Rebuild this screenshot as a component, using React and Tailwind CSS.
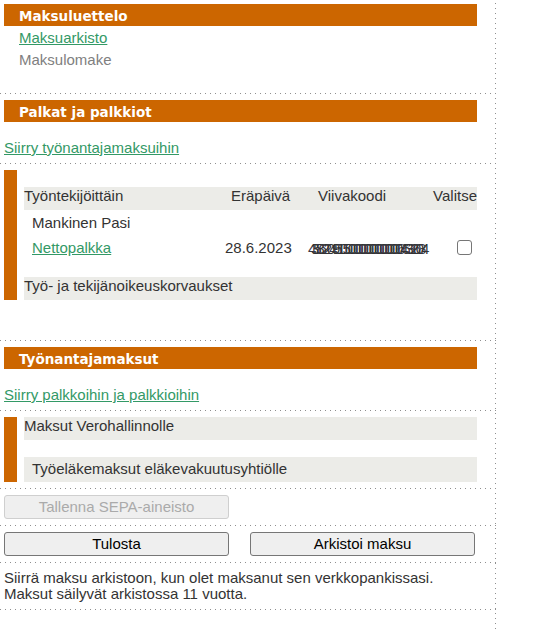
const HDots = () => <div className="h-px w-full bg-[repeating-linear-gradient(90deg,#8f8f8f_0,#8f8f8f_1px,transparent_1px,transparent_5px)]" />;

const Header = ({ children }) => (
  <div className="ml-1 flex h-[22px] w-[473px] items-center bg-[#cc6600] pl-[15px] pt-[2px] font-['DejaVu_Sans'] text-[13.5px] font-bold text-white">{children}</div>
);

const Link = ({ children }) => (
  <a href="#" className="text-[#339966] underline">{children}</a>
);

const Btn = ({ children, disabled }) => (
  <button
    disabled={disabled}
    className={`h-6 w-[225px] rounded-[3px] border bg-[#efefef] text-center text-[15px] ${disabled ? "border-[#cfcfcf] text-[#aaaaaa]" : "border-[#767676] text-black"}`}
  >
    {children}
  </button>
);

export default function App() {
  return (
    <div className="relative h-[632px] w-[545px] overflow-hidden bg-white font-['Liberation_Sans',sans-serif] text-[15px] text-[#333333]">
      <div className="flex h-full w-[496px] flex-col bg-[repeating-linear-gradient(180deg,#8f8f8f_0,#8f8f8f_1px,transparent_1px,transparent_5px)] bg-[length:1px_100%] bg-[position:495px_3px] bg-no-repeat">
        <div className="h-[4px]" />
        <Header>Maksuluettelo</Header>
        <div className="flex flex-col pl-[19px]">
          <div className="flex h-[23px] items-end leading-[22px]"><Link>Maksuarkisto</Link></div>
          <div className="flex h-[22px] items-end leading-[22px] text-[#808080]">Maksulomake</div>
        </div>
        <div className="h-[22px]" />
        <HDots />
        <div className="h-[6px]" />
        <Header>Palkat ja palkkiot</Header>
        <div className="flex h-[41px] items-end pl-1 pb-[5px] leading-[20px]"><Link>Siirry työnantajamaksuihin</Link></div>
        <HDots />
        <div className="h-[6px]" />
        <div className="ml-1 flex h-[130px] w-[473px]">
          <div className="w-[13px] bg-[#cc6600]" />
          <div className="ml-[7px] flex flex-1 flex-col pt-[17px]">
            <div className="grid h-[23px] grid-cols-[187px_86px_100px_80px] bg-[#ecece8] leading-[18px]">
              <span>Työntekijöittäin</span>
              <span className="pl-[20px]">Eräpäivä</span>
              <span className="pl-[21px]">Viivakoodi</span>
              <span className="text-right">Valitse</span>
            </div>
            <div className="flex h-[26px] items-center pl-2 pt-[2px]">Mankinen Pasi</div>
            <div className="grid h-[24px] grid-cols-[187px_86px_100px_80px] items-center">
              <span className="pl-2 pt-[2px]"><Link>Nettopalkka</Link></span>
              <span className="pl-[14px] pt-[2px]">28.6.2023</span>
              <span className="relative ml-[11px] mt-[2px] block h-[16px] w-[118px]">
                <span className="absolute left-0 top-0 whitespace-nowrap leading-[16px] tracking-[-3.1px] text-[#3a3a4a]">4562450000000000065368</span>
                <span className="absolute left-[3px] top-0 whitespace-nowrap leading-[16px] tracking-[-3.1px] text-[#333333]">3820915000000000043204</span>
              </span>
              <span className="flex justify-end pr-[5px]">
                <input type="checkbox" className="box-border h-[15px] w-[15px] appearance-none rounded-[3px] border-[1.5px] border-[#767676] bg-white" />
              </span>
            </div>
            <div className="h-[18px]" />
            <div className="h-[23px] bg-[#ecece8] leading-[18px]">Työ- ja tekijänoikeuskorvaukset</div>
          </div>
        </div>
        <div className="h-[40px]" />
        <HDots />
        <div className="h-[6px]" />
        <Header>Työnantajamaksut</Header>
        <div className="flex h-[41px] items-end pl-1 pb-[5px] leading-[20px]"><Link>Siirry palkkoihin ja palkkioihin</Link></div>
        <HDots />
        <div className="h-[6px]" />
        <div className="ml-1 flex h-[65px] w-[473px]">
          <div className="w-[13px] bg-[#cc6600]" />
          <div className="ml-[7px] flex flex-1 flex-col">
            <div className="h-[23px] bg-[#ecece8] leading-[18px]">Maksut Verohallinnolle</div>
            <div className="h-[17px]" />
            <div className="flex h-[25px] items-center bg-[#ecece8] pl-2">Työeläkemaksut eläkevakuutusyhtiölle</div>
          </div>
        </div>
        <div className="h-[6px]" />
        <HDots />
        <div className="h-[6px]" />
        <div className="flex pl-1"><Btn disabled>Tallenna SEPA-aineisto</Btn></div>
        <div className="h-[6px]" />
        <HDots />
        <div className="h-[6px]" />
        <div className="flex gap-[21px] pl-1"><Btn>Tulosta</Btn><Btn>Arkistoi maksu</Btn></div>
        <div className="h-[6px]" />
        <HDots />
        <div className="pl-1 pt-[7px] leading-[16px]">
          <div>Siirrä maksu arkistoon, kun olet maksanut sen verkkopankissasi.</div>
          <div>Maksut säilyvät arkistossa 11 vuotta.</div>
        </div>
        <div className="h-[7px]" />
        <HDots />
      </div>
    </div>
  );
}
